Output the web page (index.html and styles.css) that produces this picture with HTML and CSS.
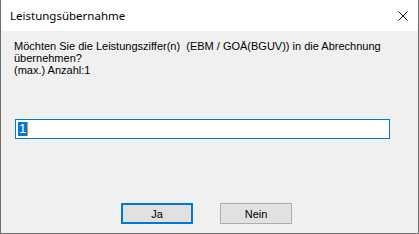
FILE: index.html
```html
<!DOCTYPE html>
<html lang="de">
<head>
    <meta charset="UTF-8">
    <title>Leistungsübernahme</title>
    <link rel="stylesheet" href="styles.css">
</head>
<body>
    <div class="window">
        <div class="titlebar">
            <span class="title">Leistungsübernahme</span>
            <button class="close-btn" aria-label="Schließen">
                <svg width="10" height="10" viewBox="0 0 10 10">
                    <path d="M0.5 0.5 L9.5 9.5 M9.5 0.5 L0.5 9.5" stroke="#111" stroke-width="1" fill="none"/>
                </svg>
            </button>
        </div>
        <div class="client">
            <div class="message">
                <div>Möchten Sie die Leistungsziffer(n)&nbsp; (EBM / GOÄ(BGUV)) in die Abrechnung</div>
                <div>übernehmen?</div>
                <div>(max.) Anzahl:1</div>
            </div>
            <div class="input-row">
                <div class="edit"><span class="sel">1</span><span class="caret"></span></div>
            </div>
            <div class="buttons">
                <button class="btn default">Ja</button>
                <button class="btn">Nein</button>
            </div>
        </div>
    </div>
</body>
</html>
```

FILE: styles.css
```css
body {
    margin: 0;
    padding: 0;
    background-color: #f0f0f0;
}

.window {
    width: 419px;
    height: 234px;
    box-sizing: border-box;
    border: 1px solid #6e6e6e;
    border-top: none;
    display: flex;
    flex-direction: column;
    background-color: #f0f0f0;
}

.titlebar {
    height: 31px;
    background-color: #fff;
    display: flex;
    align-items: center;
    justify-content: space-between;
    padding-left: 9px;
    flex-shrink: 0;
}

.title {
    font-family: "Noto Sans", sans-serif;
    font-size: 11.5px;
    color: #000;
    margin-top: -1px;
}

.close-btn {
    width: 31px;
    height: 31px;
    border: none;
    background: transparent;
    padding: 0;
    display: flex;
    align-items: center;
    justify-content: center;
}

.client {
    flex: 1;
    display: flex;
    flex-direction: column;
    padding: 9px 0 0 13px;
    font-family: "Liberation Sans", Arial, sans-serif;
    font-size: 11px;
    color: #000;
}

.message {
    line-height: 12px;
}

.input-row {
    margin-top: 43px;
}

.edit {
    width: 375px;
    height: 20px;
    box-sizing: border-box;
    border: 1px solid #0078d7;
    background-color: #fff;
    display: flex;
    align-items: center;
    padding-left: 2px;
    margin-left: 1px;
}

.sel {
    background-color: #0078d7;
    color: #fff;
    font-size: 13px;
    line-height: 14px;
    padding: 0 1px;
}

.caret {
    width: 1px;
    height: 14px;
    background-color: #f08a24;
}

.buttons {
    display: flex;
    justify-content: center;
    gap: 27px;
    margin-top: 64px;
    margin-left: -19px;
}

.btn {
    width: 72px;
    height: 21px;
    box-sizing: border-box;
    border: 1px solid #adadad;
    background-color: #e1e1e1;
    font-family: "Liberation Sans", Arial, sans-serif;
    font-size: 11px;
    color: #000;
    padding: 0;
}

.btn.default {
    border: 2px solid #0078d7;
}
```
